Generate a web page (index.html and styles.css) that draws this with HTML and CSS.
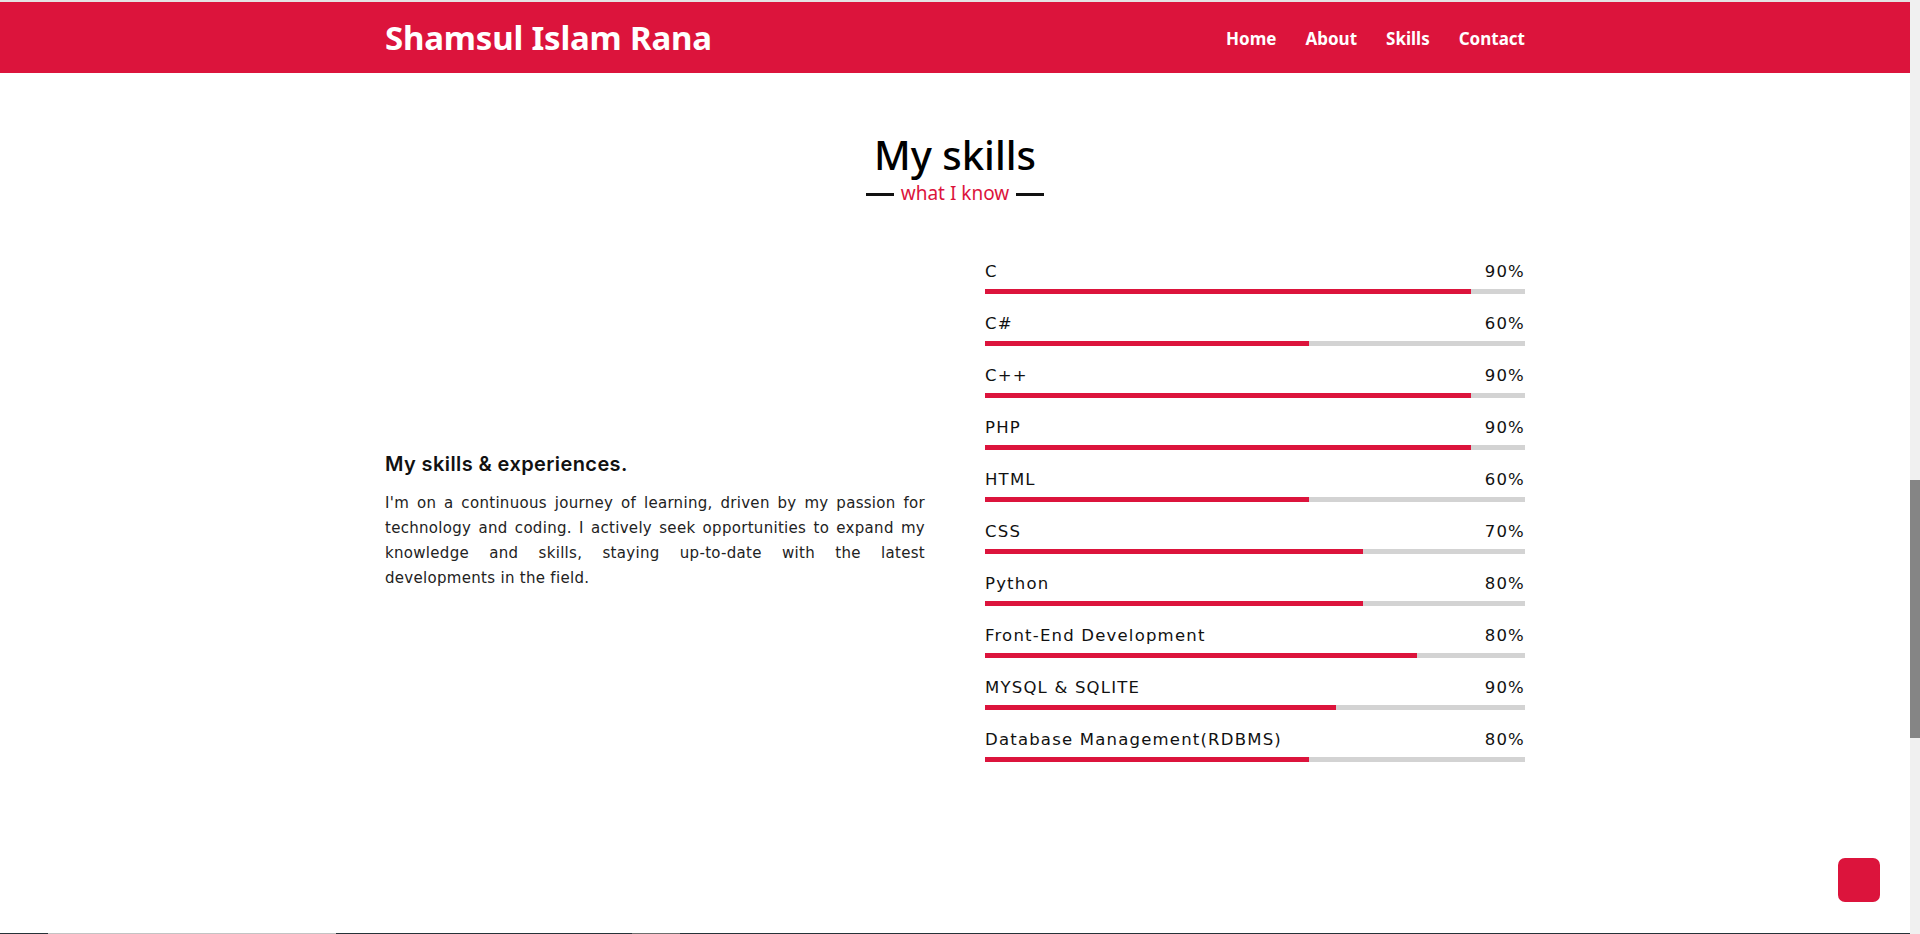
FILE: index.html
```html
<!DOCTYPE html>
<html lang="en">
<head>
<meta charset="utf-8">
<title>Shamsul Islam Rana - Skills</title>
<link rel="stylesheet" href="styles.css">
</head>
<body>
<div class="page">
  <div class="topline"></div>
  <header class="navbar">
    <div class="container nav-inner">
      <a class="brand" href="#">Shamsul Islam Rana</a>
      <nav class="menu">
        <a href="#">Home</a>
        <a href="#">About</a>
        <a href="#">Skills</a>
        <a href="#">Contact</a>
      </nav>
    </div>
  </header>

  <section class="skills">
    <div class="container">
      <h2 class="title">My skills</h2>
      <div class="subtitle"><span>what I know</span></div>

      <div class="skills-row">
        <div class="col-text">
          <h3 class="text-head">My skills &amp; experiences.</h3>
          <p class="text-body">I'm on a continuous journey of learning, driven by my passion for technology and coding. I actively seek opportunities to expand my knowledge and skills, staying up-to-date with the latest developments in the field.</p>
        </div>
        <div class="col-bars">
          <div class="skill"><div class="skill-head"><span>C</span><span>90%</span></div><div class="bar"><div class="fill" style="width:90%"></div></div></div>
          <div class="skill"><div class="skill-head"><span>C#</span><span>60%</span></div><div class="bar"><div class="fill" style="width:60%"></div></div></div>
          <div class="skill"><div class="skill-head"><span>C++</span><span>90%</span></div><div class="bar"><div class="fill" style="width:90%"></div></div></div>
          <div class="skill"><div class="skill-head"><span>PHP</span><span>90%</span></div><div class="bar"><div class="fill" style="width:90%"></div></div></div>
          <div class="skill"><div class="skill-head"><span>HTML</span><span>60%</span></div><div class="bar"><div class="fill" style="width:60%"></div></div></div>
          <div class="skill"><div class="skill-head"><span>CSS</span><span>70%</span></div><div class="bar"><div class="fill" style="width:70%"></div></div></div>
          <div class="skill"><div class="skill-head"><span>Python</span><span>80%</span></div><div class="bar"><div class="fill" style="width:70%"></div></div></div>
          <div class="skill"><div class="skill-head"><span>Front-End Development</span><span>80%</span></div><div class="bar"><div class="fill" style="width:80%"></div></div></div>
          <div class="skill"><div class="skill-head"><span>MYSQL &amp; SQLITE</span><span>90%</span></div><div class="bar"><div class="fill" style="width:65%"></div></div></div>
          <div class="skill"><div class="skill-head"><span>Database Management(RDBMS)</span><span>80%</span></div><div class="bar"><div class="fill" style="width:60%"></div></div></div>
        </div>
      </div>
    </div>
  </section>
</div>

<a class="to-top" href="#" aria-label="Back to top"></a>
<div class="bottom-edge"></div>
<div class="scrollbar"><div class="thumb"></div></div>
</body>
</html>
```
FILE: styles.css
```css
* { box-sizing: border-box; }

html, body {
  margin: 0;
  padding: 0;
  height: 100%;
  overflow: hidden;
  background: #fff;
}

body {
  font-family: "DejaVu Sans", "Liberation Sans", sans-serif;
  color: #111;
}

.page {
  margin-right: 10px;
}

.topline {
  height: 2px;
  background: #e4e4e4;
}

.container {
  width: 1140px;
  margin: 0 auto;
}

.navbar {
  background: #dc143c;
  height: 71px;
}

.nav-inner {
  height: 100%;
  display: flex;
  align-items: center;
  justify-content: space-between;
}

.brand {
  font-family: "Noto Sans", "Open Sans", sans-serif;
  font-weight: 700;
  font-size: 33px;
  color: #fff;
  text-decoration: none;
  letter-spacing: -0.2px;
  margin-top: -1px;
}

.menu {
  display: flex;
  gap: 29px;
  margin-top: 1px;
}

.menu a {
  font-family: "Noto Sans", "Open Sans", sans-serif;
  font-weight: 700;
  font-size: 17px;
  color: #fff;
  text-decoration: none;
}

.skills {
  padding-top: 56px;
}

.title {
  margin: 0;
  text-align: center;
  font-family: "Noto Sans", "Open Sans", sans-serif;
  font-weight: 500;
  font-size: 40px;
  line-height: 52px;
  color: #000;
}

.subtitle {
  display: flex;
  justify-content: center;
  align-items: center;
  gap: 7px;
  font-family: "Noto Sans", "Open Sans", sans-serif;
  font-size: 19px;
  line-height: 24px;
  color: #dc143c;
}

.subtitle::before,
.subtitle::after {
  content: "";
  width: 28px;
  height: 3px;
  background: #111;
  margin-top: 2px;
}

.skills-row {
  display: flex;
  gap: 60px;
  align-items: center;
  margin-top: 55px;
}

.col-text,
.col-bars {
  width: 540px;
}

.col-text {
  padding-top: 18px;
}

.text-head {
  margin: 0 0 13px;
  font-family: "Inter", "Liberation Sans", sans-serif;
  font-size: 20px;
  font-weight: 600;
  letter-spacing: 0.4px;
  line-height: 28px;
  color: #111;
}

.text-body {
  margin: 0;
  font-size: 15px;
  letter-spacing: 0.3px;
  line-height: 25px;
  text-align: justify;
  color: #222;
}

.skill + .skill {
  margin-top: 18px;
}

.skill-head {
  display: flex;
  justify-content: space-between;
  font-size: 16.5px;
  letter-spacing: 1.2px;
  line-height: 24px;
  color: #111;
}

.bar {
  margin-top: 5px;
  height: 5px;
  background: #d3d3d3;
}

.fill {
  height: 100%;
  background: #dc143c;
}

.to-top {
  position: fixed;
  right: 40px;
  bottom: 32px;
  width: 42px;
  height: 44px;
  border-radius: 7px;
  background: #dc143c;
}

.bottom-edge {
  position: fixed;
  left: 0;
  right: 10px;
  bottom: 0;
  height: 1px;
  background: linear-gradient(to right,
    #263238 0, #263238 48px,
    #c4c4c4 48px, #c4c4c4 336px,
    #263238 336px, #263238 632px,
    #6e6e6e 632px, #6e6e6e 680px,
    #263238 680px, #263238 100%);
}

.scrollbar {
  position: fixed;
  top: 0;
  right: 0;
  width: 10px;
  height: 100%;
  background: #f0f0f0;
}

.thumb {
  margin-top: 480px;
  height: 258px;
  background: #858585;
}
```
